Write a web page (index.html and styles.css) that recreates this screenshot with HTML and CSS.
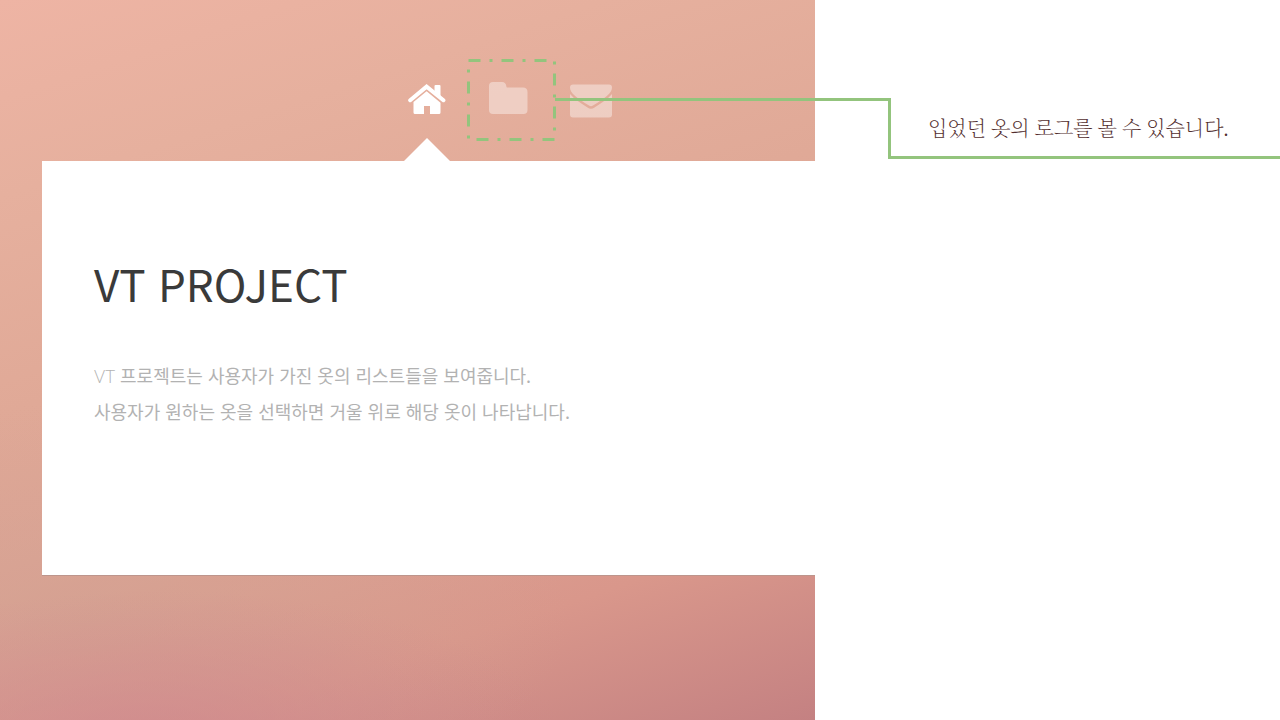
FILE: index.html
```html
<!DOCTYPE html>
<html lang="ko">
<head>
<meta charset="utf-8">
<meta name="viewport" content="width=device-width, initial-scale=1">
<title>VT PROJECT</title>
<link rel="stylesheet" href="styles.css">
</head>
<body>
<div class="page">
  <main class="stage">
    <nav class="nav" aria-label="메뉴">
      <a class="nav-link active" href="#home" aria-label="홈">
        <svg width="38" height="32" viewBox="0 0 38 32" fill="#fff">
          <path d="M2.2 17.2 L18.6 3.6 L35.4 17.2" fill="none" stroke="#fff" stroke-width="4" stroke-linecap="round" stroke-linejoin="miter"/>
          <path d="M26.5 3 Q26.5 2 27.5 2 H31.5 Q32.5 2 32.5 3 V14.5 L26.5 9.5Z"/>
          <path d="M18.6 8.3 L32.5 19.7 V29.5 Q32.5 31 31 31 H22 V23 H16 V31 H7 Q5.5 31 5.5 29.5 V19Z"/>
        </svg>
      </a>
      <a class="nav-link" href="#log" aria-label="로그">
        <svg width="40" height="34" viewBox="0 0 40 34">
          <path fill="#fff" fill-opacity=".4" d="M0 4 Q0 0 4 0 H13 Q17 0 17.500 5 Q17.700 5.500 18.500 5.500 H34 Q38.500 5.500 38.500 10 V28 Q38.500 32 34.500 32 H4 Q0 32 0 28Z"/>
        </svg>
        <svg class="marker" width="90" height="84" viewBox="0 0 90 84" aria-hidden="true">
          <rect x="1.500" y="3.500" width="86" height="79" fill="none" stroke="#93c47d" stroke-width="3" stroke-dasharray="12 9 3 9"/>
        </svg>
      </a>
      <a class="nav-link" href="#mail" aria-label="메일">
        <svg class="mail" width="42" height="34" viewBox="0 0 42 34" fill="#fff" fill-opacity=".4">
          <path d="M3 .5 H39 Q42 .5 42 3.500 C42 9 36 13.500 23 21.500 Q21 22.800 19 21.500 C6 13.500 0 9 0 3.500 Q0 .5 3 .5Z"/>
          <path d="M0 10 C4 15 10 18.500 17.500 23.500 Q21 26 24.500 23.500 C32 18.500 38 15 42 10 V30.500 Q42 33.500 39 33.500 H3 Q0 33.500 0 30.500Z"/>
        </svg>
      </a>
    </nav>
    <section class="card">
      <h1 class="title">VT PROJECT</h1>
      <p class="intro"><span class="latin">VT</span> 프로젝트는 사용자가 가진 옷의 리스트들을 보여줍니다.<br>사용자가 원하는 옷을 선택하면 거울 위로 해당 옷이 나타납니다.</p>
    </section>
  </main>
  <aside class="side">
    <p class="note">입었던 옷의 로그를 볼 수 있습니다.</p>
  </aside>
</div>
</body>
</html>
```
FILE: styles.css
```css
* { box-sizing: border-box; }

body {
  margin: 0;
  background: #fff;
  font-family: "Noto Sans CJK KR", sans-serif;
}

.page {
  display: grid;
  grid-template-columns: 815fr 465fr;
  min-height: 100vh;
}

.stage {
  padding: 0 0 144px 42px;
  background:
    radial-gradient(ellipse 50% 22% at 20% 104%, rgba(206, 132, 142, .7), transparent),
    radial-gradient(ellipse 60% 30% at 10% 86%, rgba(210, 162, 146, .7), transparent),
    linear-gradient(162deg, #eeb4a4 0%, #e6b09e 20%, #e0a997 42%, #dea495 58%, #d9978b 80%, #c48182 100%);
}

.nav {
  display: flex;
  height: 161px;
  padding: 59px 0 20px 344px;
}

.nav-link {
  position: relative;
  display: flex;
  align-items: center;
  justify-content: center;
  width: 82px;
  height: 80px;
}

.active::after {
  content: "";
  position: absolute;
  top: 79px;
  left: 18px;
  width: 46px;
  height: 23px;
  background: #fff;
  clip-path: polygon(50% 0, 100% 100%, 0 100%);
}

.marker {
  position: absolute;
  top: -2px;
  left: -1px;
}

.mail { margin-top: 4px; }

.card {
  min-height: 415px;
  padding: 88px 52px 0;
  background: #fff;
  border-bottom: 1px solid #bd958c;
}

.title {
  margin: 0;
  color: #3a3a3a;
  font-size: 44px;
  font-weight: 400;
  line-height: 68px;
}

.intro {
  margin: 40px 0 0;
  color: #b2b2b2;
  font-size: 18px;
  font-weight: 400;
  line-height: 36px;
}

.latin {
  font-family: Lato, sans-serif;
  font-size: 17px;
  font-weight: 300;
  line-height: 1;
}

.side { padding: 98px 0 0 73px; }

.note {
  position: relative;
  margin: 0;
  height: 61px;
  padding: 16px 0 0 37px;
  border-left: 3px solid #93c47d;
  border-bottom: 3px solid #93c47d;
  color: #522e2e;
  font-family: "Liberation Serif", "Noto Serif CJK KR", "Noto Sans CJK KR", serif;
  font-size: 20px;
  font-weight: 200;
  line-height: 30px;
}

.note::before {
  content: "";
  position: absolute;
  top: 0;
  right: 100%;
  width: 336px;
  height: 3px;
  background: #93c47d;
}
```
